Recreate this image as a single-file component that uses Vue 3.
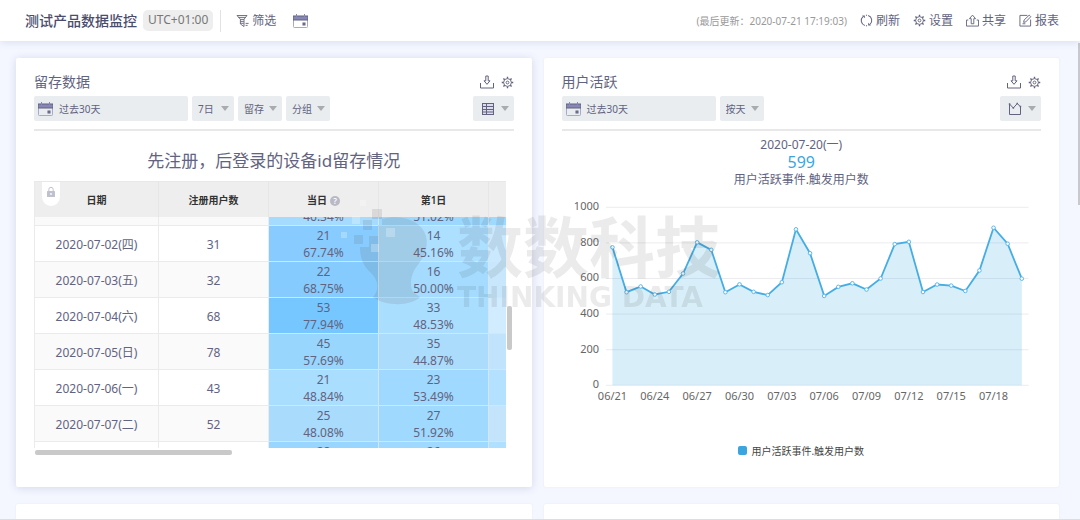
<script setup>
import { h, onMounted, ref } from 'vue'

const shapes = {
  calendar: {
    box: '0 0 15 14',
    body: () => [
      h('rect', { x: 0.5, y: 2.5, width: 14, height: 11, rx: 0.8, fill: 'none', stroke: '#a9a8cd' }),
      h('rect', { x: 0, y: 2, width: 15, height: 4, fill: '#8786b6' }),
      h('path', { d: 'M3.500 0v3M11.500 0v3', stroke: '#8786b6', fill: 'none' }),
      h('rect', { x: 10, y: 9, width: 2, height: 2, fill: '#8786b6' })
    ]
  },
  filter: {
    box: '0 0 13 14',
    body: () => [
      h('path', { d: 'M1 1.500h10L8 5.300v7.200L4.400 10V5.300zM2.400 3.400h7.200M4.200 5.400h4M4.600 7.400h3.200M4.600 9.300h3.200M9.600 9.400h3M9.600 11.400h2', 'stroke-width': 0.9 })
    ]
  },
  refresh: {
    box: '0 0 14 14',
    body: () => [
      h('path', { d: 'M5.200 12.400A5.700 5.700 0 0 1 3.200 2.800M8.800 1.600a5.700 5.700 0 0 1 2 9.600M6.400 1.300q.6-.1 1.200 0M6.400 12.700q.6.1 1.200 0', 'stroke-width': 1.1 }),
      h('path', { d: 'M2.200 1.500h3v3zM11.800 12.500h-3v-3z', fill: 'currentColor', stroke: 'none' })
    ]
  },
  gear: {
    box: '0 0 14 14',
    body: () => [
      h('circle', { cx: 7, cy: 7, r: 4.2 }),
      h('circle', { cx: 7, cy: 7, r: 1.5 }),
      h('path', {
        d: 'M7 .8v2M7 11.200v2M.8 7h2M11.200 7h2M2.600 2.600l1.400 1.400M10 10l1.400 1.400M2.600 11.400L4 10M10 4l1.400-1.400',
        'stroke-width': 1.5
      })
    ]
  },
  share: {
    box: '0 0 14 14',
    body: () => [
      h('path', { d: 'M2.500 6.500h-2v6.500h13V6.500h-2M5.600 10.500V5H3.700L7 1.200 10.300 5H8.400v5.500z' })
    ]
  },
  edit: {
    box: '0 0 14 14',
    body: () => [
      h('path', { d: 'M9 1.500H1v11.500h11.500V6M5 9l.5-2.500 5.500-5.300 1.700 1.700L7.300 8.500zM3.800 10.500h3' })
    ]
  },
  download: {
    box: '0 0 14 14',
    body: () => [
      h('path', { d: 'M.5 8v5h13V8M5.800 1v4.800H4L7 9.300l3-3.500H8.200V1z' })
    ]
  },
  grid: {
    box: '0 0 14 14',
    body: () => [
      h('rect', { x: 1.5, y: 1.5, width: 11, height: 11, fill: '#dcdcec' }),
      h('path', { d: 'M1.500 4.500h11M1.500 7.500h11M1.500 10h11M5.500 1.500v11' })
    ]
  },
  area: {
    box: '0 0 14 14',
    body: () => [
      h('path', { d: 'M1.500 2v10.500h11V4.800L9.300 1.500 5.300 6z' }),
      h('path', { d: 'M.8 1.200h1.500v1.500H.8zM4.600 5.200h1.500v1.500H4.600zM8.500 .800h1.500v1.500H8.500zM11.700 3.800h1.500v1.500h-1.500z', fill: 'currentColor', stroke: 'none' })
    ]
  },
  lock: {
    box: '0 0 10 12',
    body: () => [
      h('path', { d: 'M2.800 5.500V3.500a2.200 2.200 0 0 1 4.400 0v2' }),
      h('rect', { x: 1, y: 5, width: 8, height: 6, rx: 0.6, fill: 'currentColor', stroke: 'none' }),
      h('circle', { cx: 5, cy: 8, r: 0.9, fill: '#fff', stroke: 'none' })
    ]
  }
}

const Icon = (props) =>
  h(
    'svg',
    { viewBox: shapes[props.name].box, fill: 'none', stroke: 'currentColor', 'stroke-width': 1, 'aria-hidden': 'true' },
    shapes[props.name].body()
  )
Icon.props = ['name']

const actions = [
  { icon: 'refresh', label: '刷新' },
  { icon: 'gear', label: '设置' },
  { icon: 'share', label: '共享' },
  { icon: 'edit', label: '报表' }
]

const filters = [
  { id: 'span', label: '天数', value: '7日' },
  { id: 'kind', label: '类型', value: '留存' },
  { id: 'group', label: '分组', value: '分组' }
]

const rows = [
  { date: '2020-07-01(三)', users: 41, cells: [[19, '46.34%', '#a5dbfe'], [21, '51.02%', '#9cd7fd']], edge: '#9fd9fd' },
  { date: '2020-07-02(四)', users: 31, cells: [[21, '67.74%', '#88ccff'], [14, '45.16%', '#addfff']], edge: '#cae8fe' },
  { date: '2020-07-03(五)', users: 32, cells: [[22, '68.75%', '#85cbfe'], [16, '50.00%', '#a4dbfe']], edge: '#c8e7fc' },
  { date: '2020-07-04(六)', users: 68, cells: [[53, '77.94%', '#76c7ff'], [33, '48.53%', '#aadeff']], edge: '#d1ebff' },
  { date: '2020-07-05(日)', users: 78, cells: [[45, '57.69%', '#99d6fd'], [35, '44.87%', '#abdcfc']], edge: '#c1e4fc' },
  { date: '2020-07-06(一)', users: 43, cells: [[21, '48.84%', '#a9deff'], [23, '53.49%', '#a0d9ff']], edge: '#b4e1ff' },
  { date: '2020-07-07(二)', users: 52, cells: [[25, '48.08%', '#a8dbfc'], [27, '51.92%', '#a0d9fe']], edge: '#c3e4fb' },
  { date: '2020-07-08(三)', users: 49, cells: [[28, '57.14%', '#98d6ff'], [26, '53.06%', '#a0d9ff']], edge: '#b0e0ff' }
]

const scroller = ref(null)
onMounted(() => {
  scroller.value.scrollTop = 27
})

const values = [
  775, 523, 555, 510, 525, 628, 803, 761, 523, 567, 525, 507, 579, 876, 742,
  502, 553, 573, 538, 600, 793, 806, 524, 566, 560, 530, 645, 885, 795, 599
]
const toX = (i) => 50.5 + i * 14.13
const toY = (v) => 190.5 - v * 0.1782
const points = values.map((v, i) => ({ x: toX(i), y: toY(v) }))
const line = points.map((p) => `${p.x.toFixed(1)},${p.y.toFixed(1)}`).join(' ')
const area = `${toX(0)},190.5 ${line} ${toX(29).toFixed(1)},190.5`
const yTicks = [0, 200, 400, 600, 800, 1000]
const xTicks = ['06/21', '06/24', '06/27', '06/30', '07/03', '07/06', '07/09', '07/12', '07/15', '07/18']
</script>

<template>
  <div class="page">
    <header class="top">
      <h1>测试产品数据监控</h1>
      <span class="zone">UTC+01:00</span>
      <span class="sep"></span>
      <button class="tool filter-tool"><Icon name="filter" class="ic13" />筛选</button>
      <button class="tool" aria-label="日期"><Icon name="calendar" class="cal" /></button>
      <span class="updated">(最后更新：2020-07-21 17:19:03)</span>
      <nav class="actions">
        <button v-for="a in actions" :key="a.label" class="tool"><Icon :name="a.icon" class="ic" />{{ a.label }}</button>
      </nav>
    </header>

    <main class="board">
      <section class="card raised">
        <div class="head">
          <h2>留存数据</h2>
          <button class="tool" aria-label="下载"><Icon name="download" class="ic14" /></button>
          <button class="tool" aria-label="设置"><Icon name="gear" class="ic" /></button>
        </div>
        <div class="bar">
          <button class="chip date"><Icon name="calendar" class="cal" />过去30天</button>
          <label v-for="f in filters" :key="f.id" class="pick" :class="f.id">
            <select :id="f.id" :name="f.id" :aria-label="f.label"><option>{{ f.value }}</option></select>
            <i class="caret"></i>
          </label>
          <button class="chip view" aria-label="表格"><Icon name="grid" class="ic14" /><i class="caret"></i></button>
        </div>

        <h3>先注册，后登录的设备id留存情况</h3>
        <div class="sheet">
          <div ref="scroller" class="scroller">
            <table>
              <colgroup><col class="c1" /><col class="c2" /><col class="c2" /><col class="c2" /><col /></colgroup>
              <thead>
                <tr>
                  <th><span class="lock"><Icon name="lock" class="lock-ic" /></span>日期</th>
                  <th>注册用户数</th>
                  <th>当日<span class="help">?</span></th>
                  <th>第1日</th>
                  <th></th>
                </tr>
              </thead>
              <tbody>
                <tr v-for="r in rows" :key="r.date">
                  <td>{{ r.date }}</td>
                  <td>{{ r.users }}</td>
                  <td v-for="(c, i) in r.cells" :key="i" class="heat" :style="{ background: c[2] }">{{ c[0] }}<br />{{ c[1] }}</td>
                  <td class="heat" :style="{ background: r.edge }"></td>
                </tr>
              </tbody>
            </table>
          </div>
          <span class="vbar"></span>
        </div>
        <div class="hbar"></div>
      </section>

      <section class="card">
        <div class="head">
          <h2>用户活跃</h2>
          <button class="tool" aria-label="下载"><Icon name="download" class="ic14" /></button>
          <button class="tool" aria-label="设置"><Icon name="gear" class="ic" /></button>
        </div>
        <div class="bar">
          <button class="chip date"><Icon name="calendar" class="cal" />过去30天</button>
          <label class="pick">
            <select id="unit" name="unit" aria-label="时间粒度"><option>按天</option></select>
            <i class="caret"></i>
          </label>
          <button class="chip view" aria-label="面积图"><Icon name="area" class="ic14" /><i class="caret"></i></button>
        </div>

        <div class="summary">
          <p>2020-07-20(一)</p>
          <p class="big">599</p>
          <p>用户活跃事件.触发用户数</p>
        </div>
        <svg class="chart" viewBox="0 0 480 215" role="img" aria-label="用户活跃事件.触发用户数">
          <g v-for="t in yTicks" :key="t">
            <line x1="44" x2="467" :y1="toY(t)" :y2="toY(t)" class="rule" />
            <text x="37" :y="toY(t) + 3" text-anchor="end">{{ t }}</text>
          </g>
          <text v-for="(t, i) in xTicks" :key="t" :x="toX(i * 3)" y="205" text-anchor="middle">{{ t }}</text>
          <polygon :points="area" class="fill" />
          <polyline :points="line" class="line" />
          <circle v-for="(p, i) in points" :key="i" :cx="p.x" :cy="p.y" r="1.8" class="dot" />
        </svg>
        <div class="legend"><i class="swatch"></i>用户活跃事件.触发用户数</div>
      </section>

      <section class="card next"></section>
      <section class="card next"></section>
    </main>

    <div class="mark" aria-hidden="true">
      <svg class="head-logo" viewBox="0 0 90 110">
        <path d="M41 19C60 14 80 20 85 36C88 48 82 58 76 66C70 74 68 84 72 92L79 97C71 106 45 107 32 97C38 91 38 81 31 74C22 66 19 58 19 47H28V36H37V25H41z" />
        <path d="M31 9h10v10H31zM22 20h9v10h-9zM13 35h9v9h-9z" />
        <path class="lit" d="M19 0h6v6h-6zM11 16h8v8h-8zM45 28h9v9h-9zM0 32h6v6H0zM30 44h8v8h-8z" />
      </svg>
      <div>
        <p class="mark-cn">数数科技</p>
        <p class="mark-en">THINKING DATA</p>
      </div>
    </div>
    <span class="page-bar"></span>
  </div>
</template>

<style>
body {
  overflow: hidden;
}
</style>

<style scoped>
.page {
  position: relative;
  display: flex;
  flex-direction: column;
  height: 100vh;
  box-sizing: border-box;
  overflow: hidden;
  border-bottom: 1px solid #dcdde0;
  background: #f4f7ff;
  color: #62637f;
  font: 12px/18px "Noto Sans", "Noto Sans CJK SC", sans-serif;
}
h1, h2, h3, p {
  margin: 0;
  font-weight: 400;
}
button {
  padding: 0;
  border: 0;
  background: none;
  color: inherit;
  font: inherit;
}
svg {
  display: block;
  flex: none;
}
.ic { width: 13px; height: 13px; }
.ic13 { width: 13px; height: 14px; }
.ic14 { width: 14px; height: 14px; }
.cal { width: 15px; height: 14px; }

.top {
  z-index: 1;
  display: flex;
  flex: none;
  align-items: center;
  height: 41px;
  padding: 0 21px 0 25px;
  background: #fff;
  box-shadow: 0 1px 8px rgba(80, 90, 150, 0.16);
}
h1 {
  font-size: 14px;
  font-weight: 500;
  color: #4a4c6c;
}
.zone {
  margin: 0 7px 0 6px;
  padding: 1px 5px 2px;
  border-radius: 5px;
  background: #eee;
  color: #777;
}
.sep {
  width: 1px;
  height: 22px;
  margin-right: 15px;
  background: #e2e2e6;
}
.tool {
  display: flex;
  align-items: center;
  gap: 3px;
}
.filter-tool {
  margin-right: 17px;
}
.updated {
  margin-left: auto;
  margin-right: 13px;
  font-size: 10px;
  color: #999;
}
.actions {
  display: flex;
  gap: 13px;
}

.board {
  display: grid;
  grid-template-columns: 1fr 1fr;
  gap: 17px 12px;
  padding: 17px 21px 0 16px;
}
.card {
  min-width: 0;
  padding: 14px 18px 26px;
  border-radius: 2px;
  background: #fff;
  box-shadow: 0 0 2px rgba(80, 90, 150, 0.1);
}
.raised {
  box-shadow: 0 1px 9px rgba(80, 90, 150, 0.2);
}
.next {
  height: 429px;
  box-sizing: border-box;
}
.head {
  display: flex;
  align-items: center;
  gap: 7px;
  height: 20px;
  margin-bottom: 4px;
}
h2 {
  margin-right: auto;
  font-size: 14px;
}
.bar {
  display: flex;
  gap: 4px;
  padding-bottom: 8px;
  border-bottom: 2px solid #e8e8e8;
  font-size: 10px;
}
.chip,
.pick {
  display: flex;
  align-items: center;
  height: 25px;
  border-radius: 2px;
  background: #e9edf0;
}
.date {
  gap: 6px;
  width: 154px;
  padding-left: 4px;
}
.pick {
  position: relative;
  width: 44px;
}
.span {
  width: 42px;
}
.pick select {
  width: 100%;
  height: 25px;
  padding: 0 0 0 6px;
  border: 0;
  background: none;
  color: inherit;
  font: inherit;
  appearance: none;
}
.caret {
  border: 4px solid transparent;
  border-top: 5px solid #aaabaf;
  border-bottom: 0;
}
.pick .caret {
  position: absolute;
  right: 5px;
  pointer-events: none;
}
.view {
  justify-content: space-between;
  width: 41px;
  margin-left: auto;
  padding: 0 5px 0 8px;
}

h3 {
  margin: 18px 0 8px;
  font-size: 17px;
  line-height: 24px;
  text-align: center;
}
.sheet {
  position: relative;
  padding-right: 8px;
}
.scroller {
  height: 267px;
  overflow: hidden;
}
table {
  width: 100%;
  table-layout: fixed;
  border-spacing: 0;
  border-left: 1px solid #ebebeb;
  text-align: center;
}
.c1 { width: 124px; }
.c2 { width: 110px; }
thead {
  position: sticky;
  top: 0;
  z-index: 1;
}
th {
  position: relative;
  height: 36px;
  box-sizing: border-box;
  padding: 0;
  border-top: 1px solid #e8e8e8;
  border-right: 1px solid #e6e6e6;
  background: #eee;
  color: #333;
  font-size: 10px;
  font-weight: 600;
}
td {
  height: 36px;
  box-sizing: border-box;
  padding: 1px 0 0;
  border-right: 1px solid #ebebeb;
  border-bottom: 1px solid #ebebeb;
  line-height: 17px;
}
th:last-child,
td:last-child {
  border-right: 0;
}
tr:nth-child(odd) td {
  background: #fafafa;
}
tr:nth-child(even) td {
  background: #fff;
}
td.heat {
  border-color: #d5e6f1;
}
.lock {
  position: absolute;
  top: 0;
  left: 7px;
  display: flex;
  justify-content: center;
  width: 18px;
  height: 24px;
  border-radius: 0 0 9px 9px;
  background: #fff;
  color: #bfc1cc;
}
.lock-ic {
  width: 10px;
  height: 12px;
  margin-top: 4px;
}
.help {
  display: inline-block;
  width: 10px;
  height: 10px;
  margin-left: 3px;
  border-radius: 50%;
  background: #b9b9c6;
  color: #fff;
  font-size: 8px;
  line-height: 10px;
}
.vbar {
  position: absolute;
  top: 125px;
  right: 2px;
  width: 5px;
  height: 44px;
  border-radius: 2px;
  background: #c9c9c9;
}
.hbar {
  width: 41%;
  height: 5px;
  margin: 2px 0 6px 1px;
  border-radius: 2px;
  background: #c9c9c9;
}

.summary {
  padding-top: 5px;
  text-align: center;
}
.big {
  font-size: 16px;
  line-height: 17px;
  color: #3ba5e0;
}
.chart {
  width: 100%;
  margin-top: 6px;
}
.chart text {
  fill: #666;
  font-size: 11px;
}
.rule {
  stroke: #ececef;
}
.fill {
  fill: #3ba9e0;
  fill-opacity: 0.2;
}
.line {
  fill: none;
  stroke: #45ade4;
  stroke-width: 1.8;
}
.dot {
  fill: #fff;
  stroke: #5cb7e8;
}
.legend {
  display: flex;
  align-items: center;
  justify-content: center;
  gap: 4px;
  margin-top: 32px;
  font-size: 10px;
  color: #444;
}
.swatch {
  width: 9px;
  height: 9px;
  border-radius: 2px;
  background: #3ba5e0;
}

.mark {
  position: absolute;
  z-index: 2;
  top: 200px;
  left: 341px;
  display: flex;
  gap: 26px;
  color: rgba(34, 34, 34, 0.09);
  white-space: nowrap;
  pointer-events: none;
}
.head-logo {
  width: 90px;
  height: 110px;
  fill: rgba(90, 90, 90, 0.14);
}
.lit {
  fill: rgba(255, 255, 255, 0.25);
}
.mark-cn {
  font-size: 66px;
  font-weight: 700;
  line-height: 92px;
}
.mark-en {
  font-family: "DejaVu Sans", sans-serif;
  font-size: 28px;
  line-height: 12px;
  font-weight: 700;
}
.page-bar {
  position: absolute;
  top: 43px;
  right: 0;
  width: 2px;
  height: 162px;
  background: #c8c9cd;
}
</style>
